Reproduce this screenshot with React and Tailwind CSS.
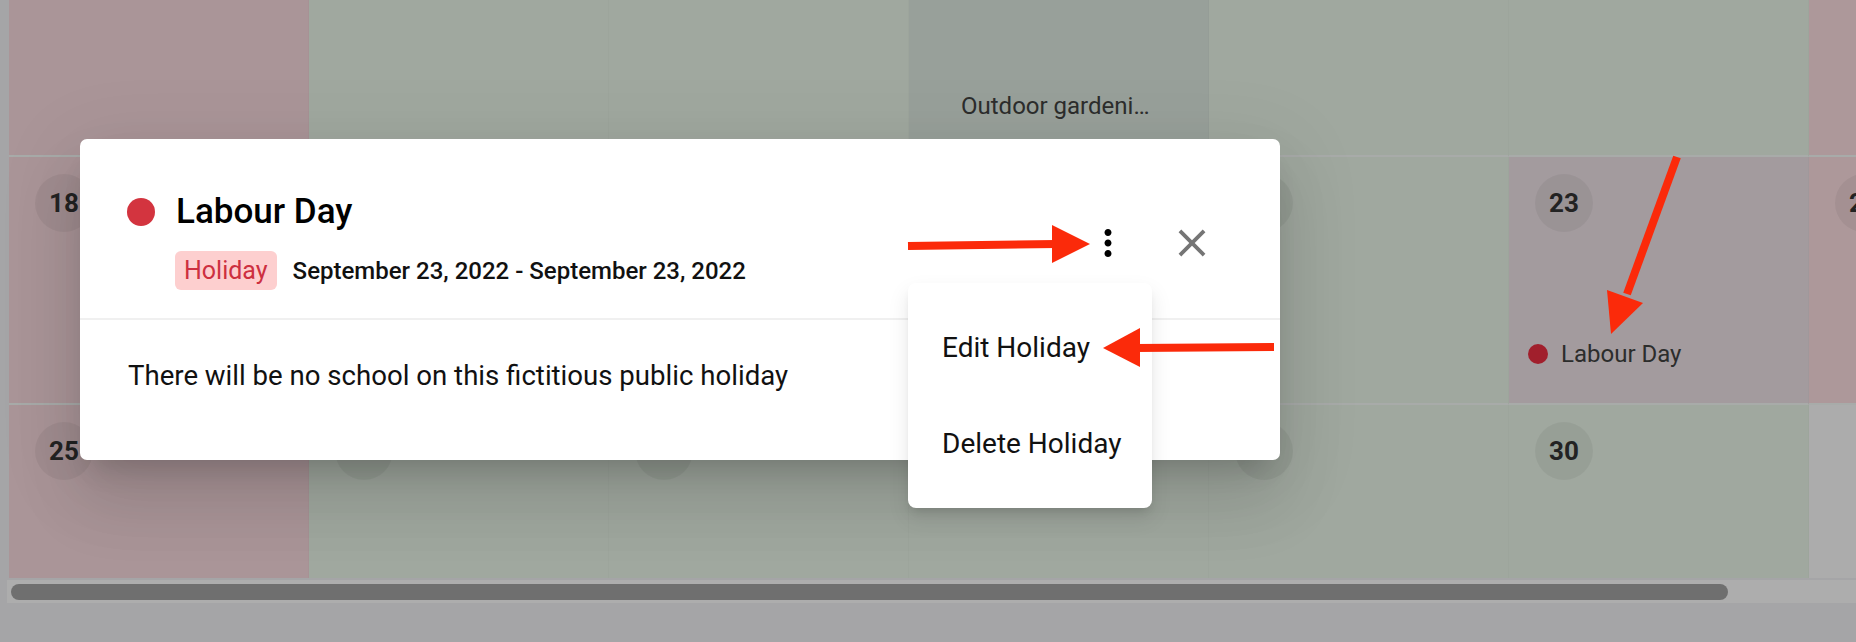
import React from "react";

const PINK = "bg-[#aa9598]";
const GREEN = "bg-[#a0a89f]";

const rows = [
  [
    { n: 11, bg: PINK },
    { n: 12, bg: GREEN },
    { n: 13, bg: GREEN },
    { n: 14, bg: "bg-[#98a09a]", event: { text: "Outdoor gardeni…", dot: null } },
    { n: 15, bg: GREEN },
    { n: 16, bg: GREEN },
    { n: 17, bg: "bg-[#ad989a]" },
  ],
  [
    { n: 18, bg: PINK },
    { n: 19, bg: GREEN },
    { n: 20, bg: GREEN },
    { n: 21, bg: GREEN },
    { n: 22, bg: GREEN },
    { n: 23, bg: "bg-[#a39b9e]", event: { text: "Labour Day", dot: "bg-[#a11f2c]" } },
    { n: 24, bg: "bg-[#ad989a]" },
  ],
  [
    { n: 25, bg: PINK },
    { n: 26, bg: GREEN },
    { n: 27, bg: GREEN },
    { n: 28, bg: GREEN },
    { n: 29, bg: GREEN },
    { n: 30, bg: GREEN },
    { n: null, bg: "bg-[#acacac]" },
  ],
];

function Cell({ cell }) {
  return (
    <div
      className={`${cell.bg} h-[248px] border-b-2 border-r border-b-[#a8aba9] border-r-black/[0.015] flex flex-col pt-[17px] pl-[26px]`}
    >
      {cell.n !== null ? (
        <div className="w-[58px] h-[58px] rounded-full bg-black/[0.05] flex items-center justify-center text-[26px] font-bold text-[#232323] leading-none">
          {cell.n}
        </div>
      ) : (
        <div className="h-[58px]" />
      )}
      {cell.event && (
        <div className="mt-[108px] -ml-[7px] h-[28px] flex items-center gap-[13px]">
          {cell.event.dot ? (
            <span className={`w-[20px] h-[20px] rounded-full ${cell.event.dot}`} />
          ) : (
            <span className="w-[20px] h-[20px]" />
          )}
          <span className="text-[24px] leading-[28px] text-[#2c2d2c] whitespace-nowrap">
            {cell.event.text}
          </span>
        </div>
      )}
    </div>
  );
}

export default function App() {
  return (
    <div className="relative w-[1856px] h-[642px] overflow-hidden bg-[#a5a5a7] font-['Roboto',sans-serif]">
      {/* calendar viewport */}
      <div className="ml-[9px] h-[578px] overflow-hidden">
        <div className="-mt-[91px] grid grid-cols-[repeat(7,300px)] w-[2100px]">
          {rows.map((row, ri) =>
            row.map((cell, ci) => <Cell key={`${ri}-${ci}`} cell={cell} />)
          )}
        </div>
      </div>

      {/* horizontal scrollbar */}
      <div className="ml-[7px] mt-[2px] h-[23px] bg-[#adadad] pl-[4px] pt-[4px]">
        <div className="w-[1717px] h-[16px] rounded-full bg-[#6f6f6f]" />
      </div>

      {/* dialog */}
      <div className="absolute left-[80px] top-[139px] w-[1200px] rounded-[7px] bg-white shadow-[0_19px_26px_-12px_rgba(0,0,0,0.16),0_42px_66px_5px_rgba(0,0,0,0.09),0_16px_80px_14px_rgba(0,0,0,0.07)]">
        <div className="flex items-center justify-between pl-[47px] pr-[58px] pt-[45px] pb-[28px] border-b-2 border-[#f0f0f0]">
          <div className="flex flex-col">
            <div className="flex items-center h-[56px]">
              <span className="w-[28px] h-[28px] rounded-full bg-[#d3343f] mr-[21px]" />
              <h2 className="text-[35px] leading-[56px] font-medium text-black">Labour Day</h2>
            </div>
            <div className="flex items-center mt-[11px] pl-[48px]">
              <span className="h-[39px] px-[9px] rounded-[6px] bg-[#fdcfcf] text-[#cd3040] text-[25px] flex items-center">
                Holiday
              </span>
              <span className="ml-[16px] text-[24px] font-medium text-[#111]">
                September 23, 2022 - September 23, 2022
              </span>
            </div>
          </div>
          <div className="flex items-center gap-[24px] mt-[12px]">
            <button className="w-[60px] h-[60px] flex items-center justify-center rounded-full">
              <svg width="42" height="42" viewBox="0 0 24 24" fill="#000">
                <path d="M12 8c1.1 0 2-.9 2-2s-.9-2-2-2-2 .9-2 2 .9 2 2 2m0 2c-1.1 0-2 .9-2 2s.9 2 2 2 2-.9 2-2-.9-2-2-2m0 6c-1.1 0-2 .9-2 2s.9 2 2 2 2-.9 2-2-.9-2-2-2" />
              </svg>
            </button>
            <button className="w-[60px] h-[60px] flex items-center justify-center rounded-full">
              <svg width="46" height="46" viewBox="0 0 24 24" fill="#757575">
                <path d="M19 6.41 17.59 5 12 10.59 6.41 5 5 6.41 10.59 12 5 17.59 6.41 19 12 13.41 17.59 19 19 17.59 13.41 12z" />
              </svg>
            </button>
          </div>
        </div>
        <div className="h-[140px] pl-[48px] pt-[35px]">
          <p className="text-[27.6px] leading-[42px] text-[#111]">
            There will be no school on this fictitious public holiday
          </p>
        </div>
      </div>

      {/* menu */}
      <div className="absolute left-[908px] top-[283px] w-[244px] h-[225px] rounded-[8px] bg-white py-[17px] shadow-[0_6px_10px_-4px_rgba(0,0,0,0.12),0_10px_20px_2px_rgba(0,0,0,0.08)]">
        <div className="h-[96px] pl-[34px] flex items-center text-[28px] text-[#111]">Edit Holiday</div>
        <div className="h-[96px] pl-[34px] flex items-center text-[28px] text-[#111]">Delete Holiday</div>
      </div>

      {/* annotation arrows */}
      <svg
        className="absolute inset-0 pointer-events-none"
        width="1856"
        height="642"
        viewBox="0 0 1856 642"
      >
        <g fill="#fb2a0a" stroke="#fb2a0a">
          <line x1="908" y1="246" x2="1056" y2="244" strokeWidth="8" />
          <polygon points="1052,225 1052,263 1090,244" stroke="none" />
          <line x1="1274" y1="347" x2="1136" y2="348" strokeWidth="8" />
          <polygon points="1140,328 1140,367 1103,348" stroke="none" />
          <line x1="1677" y1="157" x2="1627" y2="294" strokeWidth="8" />
          <polygon points="1607,290 1643,303 1611,334" stroke="none" />
        </g>
      </svg>
    </div>
  );
}
